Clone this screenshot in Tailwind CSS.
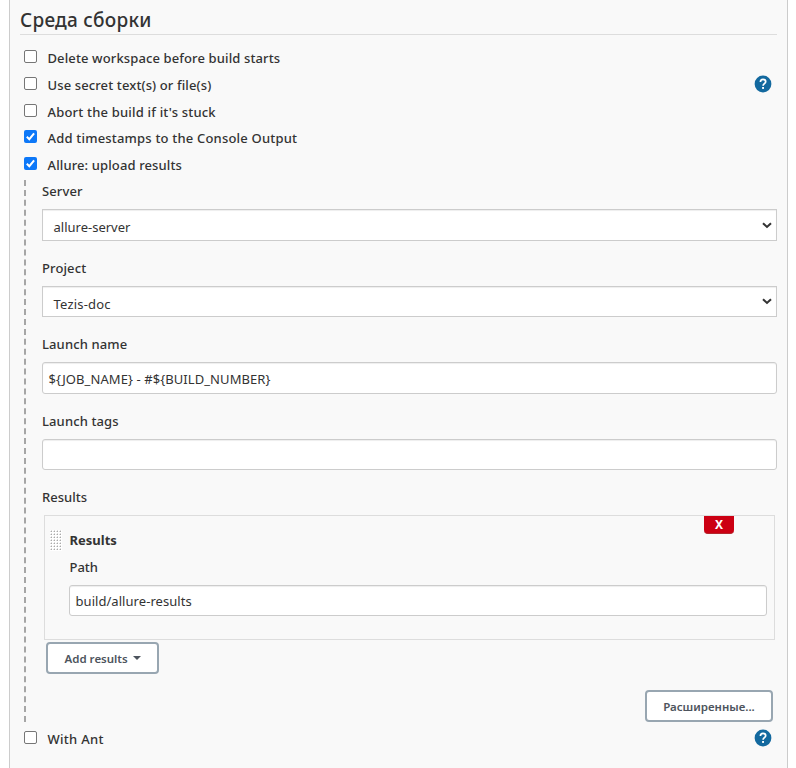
<!DOCTYPE html>
<html lang="ru">
<head>
<meta charset="utf-8">
<title>Среда сборки</title>
<script src="https://cdn.jsdelivr.net/npm/@tailwindcss/browser@4"></script>
</head>
<body class="bg-white font-['Noto_Sans',sans-serif] text-[13px] text-[#333] overflow-hidden">
<svg class="hidden">
  <symbol id="help" viewBox="0 0 18 18"><circle cx="9" cy="9" r="8.4" fill="#13699f"/><path d="M6.4 7.1C6.4 5.3 7.4 4.3 9 4.3s2.7 1 2.7 2.4c0 1.9-2.6 2-2.6 4" fill="none" stroke="#fff" stroke-width="1.7"/><rect x="8.1" y="12" width="1.9" height="1.9" fill="#fff"/></symbol>
  <symbol id="tick" viewBox="0 0 13 13"><path d="M2.8 6.7 5.3 9.2 10.1 3.3" fill="none" stroke="#fff" stroke-width="2"/></symbol>
  <symbol id="chev" viewBox="0 0 10 7"><path d="M1 1.2 5 4.9 9 1.2" fill="none" stroke="#333" stroke-width="2.1"/></symbol>
</svg>
<main class="ml-[9px] w-[779px] h-[768px] bg-[#f9f9f9] border-x border-[#ccc] px-[10px] pt-[7px]">
  <h1 class="h-7 border-b border-[#ddd] text-[19px] leading-[26px] font-medium tracking-[0.25px]"><span>Среда сборки</span></h1>
  <section class="pt-[10px] pl-1 font-medium">
    <div class="h-[27px] flex items-start pt-[5px]"><i class="size-[13px] rounded-[2px] border border-[#767676] bg-white"></i><span class="ml-[10.5px] leading-4 tracking-[0.12px]">Delete workspace before build starts</span></div>
    <div class="h-[27px] flex items-start pt-[5px]"><i class="size-[13px] rounded-[2px] border border-[#767676] bg-white"></i><span class="ml-[10.5px] leading-4 tracking-[0.12px]">Use secret text(s) or file(s)</span><svg class="ml-auto mr-[5px] -mt-[2px] size-[18px]"><use href="#help"/></svg></div>
    <div class="h-[26px] flex items-start pt-[5px]"><i class="size-[13px] rounded-[2px] border border-[#767676] bg-white"></i><span class="ml-[10.5px] leading-4 tracking-[0.19px]">Abort the build if it's stuck</span></div>
    <div class="h-[27px] flex items-start pt-[5px]"><svg class="size-[13px] rounded-[2px] bg-[#0d78f8]"><use href="#tick"/></svg><span class="ml-[10.5px] leading-4 tracking-[0.19px]">Add timestamps to the Console Output</span></div>
    <div class="h-[28px] flex items-start pt-[5px]"><svg class="size-[13px] rounded-[2px] bg-[#0d78f8]"><use href="#tick"/></svg><span class="ml-[10.5px] leading-4 tracking-[0.12px]">Allure: upload results</span></div>
  </section>
  <section class="ml-1 h-[542px] border-l-2 border-dashed border-[#a6a6a6] pl-4">
    <label class="block h-[29px] pt-[2px] leading-[18px] font-medium tracking-[0.12px]"><span>Server</span></label>
    <div class="h-8 border border-[#ccc] bg-white shadow-[inset_0_1px_1px_#eee] flex items-center pl-[10.5px] pr-1"><span class="mt-1.5">allure-server</span><svg class="ml-auto w-[10px] h-[7px]"><use href="#chev"/></svg></div>
    <label class="block h-[45px] pt-[18px] leading-[18px] font-medium tracking-[0.12px]"><span>Project</span></label>
    <div class="h-[31px] border border-[#ccc] bg-white shadow-[inset_0_1px_1px_#eee] flex items-center pl-[10.5px] pr-1"><span class="mt-1.5 tracking-[0.2px]">Tezis-doc</span><svg class="ml-auto w-[10px] h-[7px]"><use href="#chev"/></svg></div>
    <label class="block h-[45px] pt-[18px] leading-[18px] font-medium tracking-[0.12px]"><span>Launch name</span></label>
    <div class="h-8 rounded-[3px] border border-[#ccc] bg-white shadow-[inset_0_1px_1px_#eee] flex items-center pl-[5.5px]"><span class="mt-[3px] tracking-[0.08px]">${JOB_NAME} - #${BUILD_NUMBER}</span></div>
    <label class="block h-[45px] pt-[18px] leading-[18px] font-medium tracking-[0.12px]"><span>Launch tags</span></label>
    <div class="h-[31px] rounded-[3px] border border-[#ccc] bg-white shadow-[inset_0_1px_1px_#eee]"></div>
    <label class="block h-[45px] pt-[18px] leading-[18px] font-medium"><span>Results</span></label>
    <div class="relative ml-[2px] mr-[2px] h-[125px] border border-[#ddd] pl-[24px] pr-[7px] pt-[15px]">
      <svg class="absolute left-[5px] top-[14px] w-[12px] h-[21px]"><defs><pattern id="grip" width="3" height="3" patternUnits="userSpaceOnUse"><rect width="3" height="3" fill="#fff"/><rect x="1" y="1" width="1" height="1" fill="#aaa"/><rect x="0" y="1" width="1" height="1" fill="#ddd"/><rect x="1" y="0" width="1" height="1" fill="#ddd"/></pattern></defs><rect width="12" height="21" fill="url(#grip)"/></svg>
      <button class="absolute left-[659px] top-0 w-[30px] h-[18px] rounded-b-[4px] border-b border-[#b3272d] bg-[#cc0013] text-white font-bold text-[12px] leading-[18px]"><span>X</span></button>
      <div class="h-[27px] leading-[18px] font-bold pl-[0.5px]"><span>Results</span></div>
      <div class="h-[27px] leading-[18px] font-medium pl-[0.5px]"><span>Path</span></div>
      <div class="h-[31px] rounded-[3px] border border-[#ccc] bg-white shadow-[inset_0_1px_1px_#eee] flex items-center pl-[5.5px]"><span class="mt-[3px] tracking-[0.05px]">build/allure-results</span></div>
    </div>
    <button class="mt-[2px] ml-1 flex h-8 w-[113px] items-center rounded-[4px] border-2 border-[#98a6b1] bg-white pl-[16.5px] text-[11.5px] font-semibold text-[#4d545d]"><span class="mt-[2px]">Add results</span><svg class="ml-[5px] w-2 h-1 mb-px"><path d="M0 0h8L4 4z" fill="#4d545d"/></svg></button>
    <button class="mt-4 ml-auto mr-1 flex h-8 w-[128px] items-center justify-center rounded-[4px] border-2 border-[#98a6b1] bg-white text-[11.5px] font-semibold text-[#4d545d]"><span class="mt-[2px]">Расширенные...</span></button>
  </section>
  <div class="h-[32px] flex items-start pl-1 pt-[9px] font-medium"><i class="size-[13px] rounded-[2px] border border-[#767676] bg-white"></i><span class="ml-[10.5px] leading-4 tracking-[0.3px]">With Ant</span><svg class="ml-auto mr-[5px] -mt-[2px] size-[18px]"><use href="#help"/></svg></div>
</main>
</body>
</html>
